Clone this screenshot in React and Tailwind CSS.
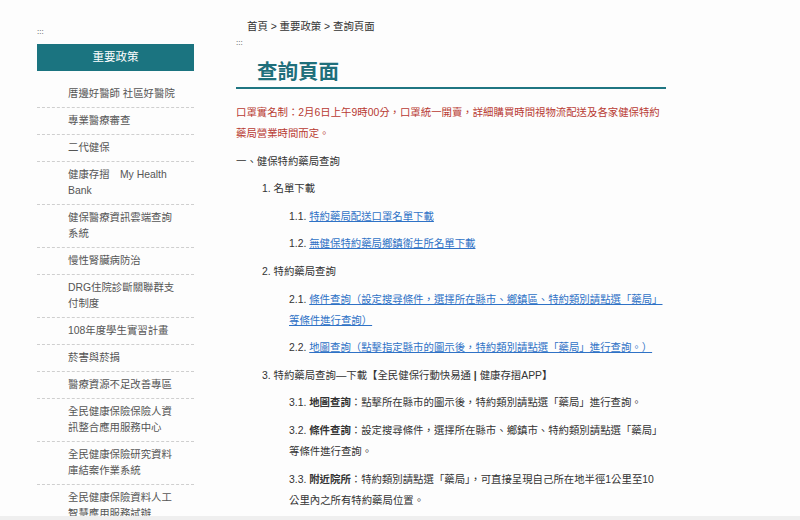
import React from 'react';

const sideLinks = [
  '厝邊好醫師 社區好醫院',
  '專業醫療審查',
  '二代健保',
  '健康存摺\u3000My Health Bank',
  '健保醫療資訊雲端查詢系統',
  '慢性腎臟病防治',
  'DRG住院診斷關聯群支付制度',
  '108年度學生實習計畫',
  '菸害與菸捐',
  '醫療資源不足改善專區',
  '全民健康保險保險人資訊整合應用服務中心',
  '全民健康保險研究資料庫結案作業系統',
  '全民健康保險資料人工智慧應用服務試辦',
];

const Sidebar = () => (
  <aside className="w-[157px] shrink-0 pt-[26px]">
    <div className="h-[12px] text-[8px] leading-[12px] text-[#333]">:::</div>
    <div className="mt-[6px] flex h-[27px] items-center justify-center bg-[#1b7480] text-[11.5px] text-white">
      重要政策
    </div>
    <ul className="mt-[10px]">
      {sideLinks.map((label) => (
        <li
          key={label}
          className="border-b border-dashed border-[#cfcfcf] py-[5px] pl-[31px] pr-[12px] text-[10.4px] leading-[16px] text-[#555]"
        >
          {label}
        </li>
      ))}
    </ul>
  </aside>
);

const Line = ({ indent = '', children }) => (
  <p className={`mb-[6.6px] leading-[21px] ${indent}`}>{children}</p>
);

const A = ({ children }) => (
  <a href="#" className="text-[#2f72c6] underline">
    {children}
  </a>
);

const Content = () => (
  <main className="ml-[42px] w-[430px] text-[10.4px] text-[#333]">
    <div className="pl-[11px] pt-[19px] leading-[16px]">首頁 &gt; 重要政策 &gt; 查詢頁面</div>
    <div className="mt-[3px] h-[10px] text-[8px] leading-[10px]">:::</div>
    <h1 className="mt-[10px] border-b-2 border-[#1f7682] pb-[1px] pl-[21px] text-[20.5px] font-bold leading-[28px] text-[#1f6f7b]">
      查詢頁面
    </h1>

    <div className="mt-[13px]">
      <Line>
        <span className="text-[#b83a32]">
          口罩實名制：2月6日上午9時00分，口罩統一開賣，詳細購買時間視物流配送及各家健保特約藥局營業時間而定。
        </span>
      </Line>
      <Line>一、健保特約藥局查詢</Line>

      <Line indent="pl-[26px]">1. 名單下載</Line>
      <Line indent="pl-[53px]">
        1.1. <A>特約藥局配送口罩名單下載</A>
      </Line>
      <Line indent="pl-[53px]">
        1.2. <A>無健保特約藥局鄉鎮衛生所名單下載</A>
      </Line>

      <Line indent="pl-[26px]">2. 特約藥局查詢</Line>
      <Line indent="pl-[53px]">
        2.1. <A>條件查詢（設定搜尋條件，選擇所在縣市、鄉鎮區、特約類別請點選「藥局」等條件進行查詢）</A>
      </Line>
      <Line indent="pl-[53px]">
        2.2. <A>地圖查詢（點擊指定縣市的圖示後，特約類別請點選「藥局」進行查詢。）</A>
      </Line>

      <Line indent="pl-[26px]">
        3. 特約藥局查詢—下載<span className="font-bold">【</span>全民健保行動快易通
        <span className="font-bold"> | </span>健康存摺APP<span className="font-bold">】</span>
      </Line>
      <Line indent="pl-[53px]">
        3.1. <span className="font-bold">地圖查詢</span>：點擊所在縣市的圖示後，特約類別請點選「藥局」進行查詢。
      </Line>
      <Line indent="pl-[53px]">
        3.2. <span className="font-bold">條件查詢</span>：設定搜尋條件，選擇所在縣市、鄉鎮市、特約類別請點選「藥局」等條件進行查詢。
      </Line>
      <Line indent="pl-[53px]">
        3.3. <span className="font-bold">附近院所</span>：特約類別請點選「藥局」，可直接呈現自己所在地半徑1公里至10
        <br />
        公里內之所有特約藥局位置。
      </Line>
    </div>
  </main>
);

export default function App() {
  return (
    <div className="min-h-[520px] bg-[#fdfdfd] font-['Liberation_Sans','Noto_Sans_CJK_TC',sans-serif]">
      <div className="flex pl-[37px]">
        <Sidebar />
        <Content />
      </div>
      <div className="fixed bottom-0 left-0 h-[4px] w-full bg-[#efefef]" />
    </div>
  );
}
